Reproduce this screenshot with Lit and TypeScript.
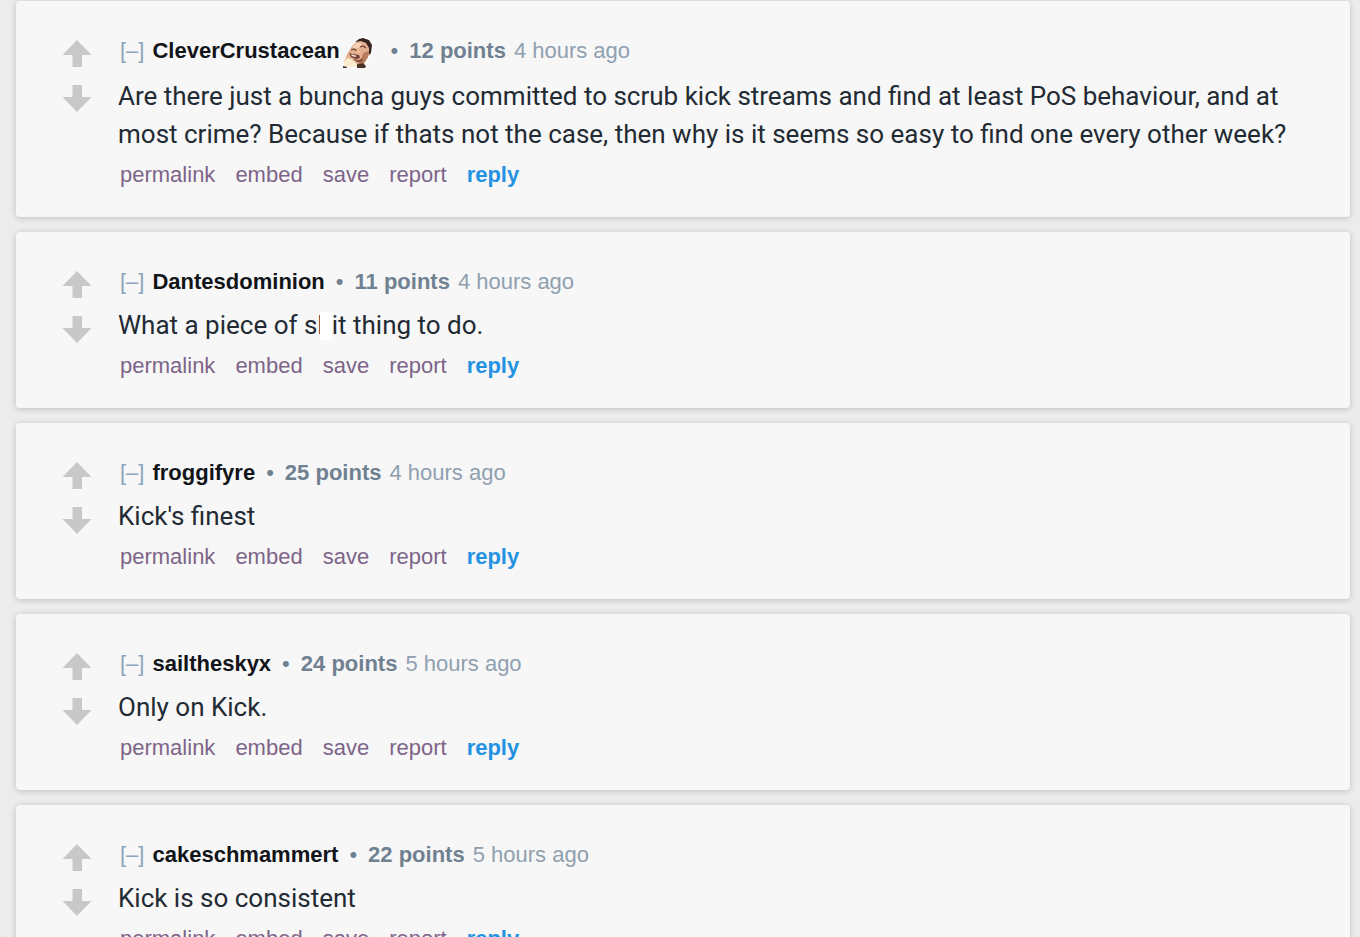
import { LitElement, html, css, nothing } from "lit";
import { customElement, property } from "lit/decorators.js";

interface Comment {
  author: string;
  emote?: boolean;
  points: number;
  age: string;
  body: unknown;
}

const comments: Comment[] = [
  {
    author: "CleverCrustacean",
    emote: true,
    points: 12,
    age: "4 hours ago",
    body: "Are there just a buncha guys committed to scrub kick streams and find at least PoS behaviour, and at most crime? Because if thats not the case, then why is it seems so easy to find one every other week?",
  },
  {
    author: "Dantesdominion",
    points: 11,
    age: "4 hours ago",
    body: html`What a piece of s<span class="masked">h</span>it thing to do.`,
  },
  { author: "froggifyre", points: 25, age: "4 hours ago", body: "Kick's finest" },
  { author: "sailtheskyx", points: 24, age: "5 hours ago", body: "Only on Kick." },
  { author: "cakeschmammert", points: 22, age: "5 hours ago", body: "Kick is so consistent" },
];

@customElement("comment-card")
export class CommentCard extends LitElement {
  @property({ attribute: false }) comment!: Comment;

  static styles = css`
    :host {
      display: block;
    }
    .card {
      display: flex;
      gap: 26px;
      padding: 34px 48px 30px 46px;
      background: #f7f7f7;
      border-radius: 4px;
      box-shadow: 0 1px 6px rgba(0, 0, 0, 0.2);
    }
    .votes {
      display: flex;
      flex-direction: column;
      flex: none;
      gap: 18px;
      padding-top: 5px;
    }
    button {
      border: 0;
      padding: 0;
      background: none;
      font: inherit;
      color: inherit;
      cursor: pointer;
    }
    .vote {
      display: block;
      height: 27px;
    }
    .vote svg,
    .emote {
      display: block;
    }
    .entry {
      flex: 1;
      min-width: 0;
    }
    .tagline {
      display: flex;
      align-items: flex-start;
      font-size: 22px;
      line-height: 32px;
      color: #8fa0b0;
    }
    .toggle {
      margin: 0 8px 0 2px;
      color: #8ba6bd;
    }
    a {
      text-decoration: none;
      color: inherit;
    }
    .author {
      font-weight: bold;
      color: #111418;
    }
    .emote {
      margin: 0 6px 0 2px;
    }
    .dot {
      margin: 0 11px;
      color: #6f8191;
    }
    .points {
      margin-right: 8px;
      font-weight: bold;
      color: #6f8191;
    }
    .body {
      margin: 8px 0 10px;
      font-family: Roboto, sans-serif;
      font-size: 26px;
      line-height: 38px;
      color: #222a33;
    }
    .masked {
      position: relative;
    }
    .masked::after {
      content: "";
      position: absolute;
      inset: 2px 0 0 3px;
      background: #ffffff;
    }
    .actions {
      display: flex;
      gap: 20px;
      padding-left: 2px;
      font-size: 22px;
      line-height: 24px;
      color: #7d6488;
    }
    .reply {
      font-weight: bold;
      color: #2492e2;
    }
  `;

  private emote() {
    return html`<svg class="emote" width="32" height="34" viewBox="0 0 32 34" role="img" aria-label="laughing face">
      <path d="M0 32 1 26 5 18 9 11 14 5 20 2 27 3 31 9 30 19 25 27 23 33 0 33Z" fill="#fff" />
      <path d="M2 27 5 19 10 11 15 6 22 5 28 9 29 17 25 24 22 29 12 30Z" fill="#e2b091" />
      <path d="M13 7 17 4 21 3 27 5 30 10 29 18 27 20 27 13 24 8 19 6Z" fill="#35231f" />
      <path d="M10 12 15 8 20 8 18 12 12 14Z" fill="#f6d3b8" />
      <path d="M9 15 12 14 15 16" fill="none" stroke="#70402f" stroke-width="1.300" />
      <path d="M18 12 21 11 24 13" fill="none" stroke="#70402f" stroke-width="1.300" />
      <path d="M15 14 18 16 17 18 14 18Z" fill="#f0bc98" />
      <path d="M7 18 11 19 17 20 18 23 14 24 9 22Z" fill="#713a30" />
      <path d="M9 19 15 21 13 22 10 21Z" fill="#fae5d6" />
      <path d="M21 18 27 16 26 22 22 28 16 28 18 25 20 22Z" fill="#b57b5b" />
      <path d="M11 24 17 25 21 23 20 27 15 27Z" fill="#8a5540" />
      <path d="M2 27 5 23 9 24 14 28 17 32 1 32Z" fill="#fbebcf" />
      <path d="M15 29 21 28 24 31 23 33 15 33Z" fill="#4b3427" />
      <path d="M1 31 5 32 5 33 1 33Z" fill="#4b3427" />
    </svg>`;
  }

  render() {
    const c = this.comment;
    return html`<article class="card">
      <div class="votes">
        <button class="vote" aria-label="upvote">
          <svg width="30" height="27" viewBox="0 0 30 27"><path d="M15 0 29.500 15H20V27H10.500V15H.5Z" fill="#c8c8c8" /></svg>
        </button>
        <button class="vote" aria-label="downvote">
          <svg width="30" height="27" viewBox="0 0 30 27"><path d="M15 27 29.500 12H20V0H10.500V12H.5Z" fill="#c8c8c8" /></svg>
        </button>
      </div>
      <div class="entry">
        <header class="tagline">
          <button class="toggle" aria-label="collapse">[–]</button>
          <a class="author" href="#">${c.author}</a>
          ${c.emote ? this.emote() : nothing}
          <span class="dot">•</span>
          <span class="points">${c.points} points</span>
          <time>${c.age}</time>
        </header>
        <p class="body">${c.body}</p>
        <nav class="actions">
          <a href="#">permalink</a>
          <a href="#">embed</a>
          <a href="#">save</a>
          <a href="#">report</a>
          <a class="reply" href="#">reply</a>
        </nav>
      </div>
    </article>`;
  }
}

@customElement("app-root")
export class AppRoot extends LitElement {
  static styles = css`
    :host {
      display: block;
      height: 100vh;
      overflow: hidden;
      background: #ececec;
      font-family: "Liberation Sans", Arial, sans-serif;
    }
    .thread {
      display: flex;
      flex-direction: column;
      gap: 15px;
      padding: 1px 10px 15px 16px;
    }
  `;

  render() {
    return html`<main class="thread">
      ${comments.map((c) => html`<comment-card .comment=${c}></comment-card>`)}
    </main>`;
  }
}
